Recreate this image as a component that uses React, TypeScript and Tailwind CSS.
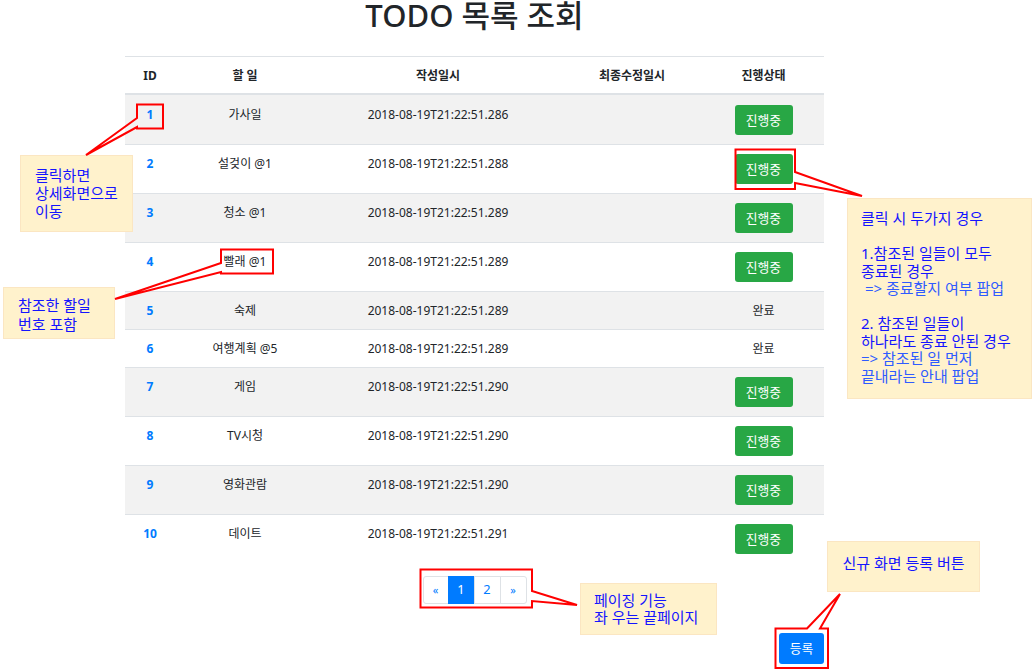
import React from "react";

type Row = { id: number; title: string; created: string; done: boolean };

const rows: Row[] = [
  { id: 1, title: "가사일", created: "2018-08-19T21:22:51.286", done: false },
  { id: 2, title: "설겆이 @1", created: "2018-08-19T21:22:51.288", done: false },
  { id: 3, title: "청소 @1", created: "2018-08-19T21:22:51.289", done: false },
  { id: 4, title: "빨래 @1", created: "2018-08-19T21:22:51.289", done: false },
  { id: 5, title: "숙제", created: "2018-08-19T21:22:51.289", done: true },
  { id: 6, title: "여행계획 @5", created: "2018-08-19T21:22:51.289", done: true },
  { id: 7, title: "게임", created: "2018-08-19T21:22:51.290", done: false },
  { id: 8, title: "TV시청", created: "2018-08-19T21:22:51.290", done: false },
  { id: 9, title: "영화관람", created: "2018-08-19T21:22:51.290", done: false },
  { id: 10, title: "데이트", created: "2018-08-19T21:22:51.291", done: false },
];

const grid = "grid grid-cols-[50px_140px_246px_142px_121px]";

export default function App() {
  return (
    <div
      className="relative w-[1036px] h-[672px] overflow-hidden bg-white text-[#212529]"
      style={{ fontFamily: '"Noto Sans", "Noto Sans CJK KR", sans-serif' }}
    >
      <div className="ml-[125px] w-[699px]">
        <h1 className="h-[56px] text-center text-[31px] leading-none font-medium">
          TODO 목록 조회
        </h1>

        <div className="text-[12px] leading-[19px]">
          <div className={`${grid} h-[39px] border-t border-b-2 border-[#dee2e6] font-bold items-center text-center`}>
            <div>ID</div>
            <div>할 일</div>
            <div>작성일시</div>
            <div>최종수정일시</div>
            <div>진행상태</div>
          </div>
          {rows.map((r, i) => (
            <div
              key={r.id}
              className={`${grid} text-center ${r.done ? "h-[38px]" : "h-[49px]"} ${
                i === 0 ? "pt-[10px]" : "border-t border-[#dee2e6] pt-[9px]"
              } ${i % 2 === 0 ? "bg-[#f2f2f2]" : "bg-white"}`}
            >
              <div className="font-bold text-[#007bff]">{r.id}</div>
              <div>{r.title}</div>
              <div>{r.created}</div>
              <div></div>
              <div className="flex justify-center">
                {r.done ? (
                  <span>완료</span>
                ) : (
                  <button className="w-[58px] h-[30px] rounded-[3px] bg-[#28a745] text-white text-[12.8px] leading-none flex items-center justify-center">
                    진행중
                  </button>
                )}
              </div>
            </div>
          ))}
        </div>

        <div className="mt-[13px] flex justify-center text-[12.8px]">
          <div className="flex">
            <a className="w-[26px] h-[28px] flex items-center justify-center border border-[#dee2e6] rounded-l-[3px] text-[#007bff] text-[11px]">
              «
            </a>
            <a className="-ml-px w-[27px] h-[28px] flex items-center justify-center border border-[#007bff] bg-[#007bff] text-white">
              1
            </a>
            <a className="-ml-px w-[27px] h-[28px] flex items-center justify-center border border-[#dee2e6] text-[#007bff]">
              2
            </a>
            <a className="-ml-px w-[27px] h-[28px] flex items-center justify-center border border-[#dee2e6] rounded-r-[3px] text-[#007bff] text-[11px]">
              »
            </a>
          </div>
        </div>

        <div className="mt-[29px] flex justify-end">
          <button className="w-[45px] h-[31px] rounded-[3px] bg-[#007bff] text-white text-[12.8px] flex items-center justify-center">
            등록
          </button>
        </div>
      </div>

      {/* annotation callouts */}
      <div className="absolute left-[20px] top-[155px] w-[113px] h-[77px] bg-[#fff2cc] border border-[#fbe6c2] pl-[14px] pt-[10px] text-[15px] leading-[18px] text-[#1414ff]">
        <div>클릭하면</div>
        <div>상세화면으로</div>
        <div>이동</div>
      </div>

      <div className="absolute left-[3px] top-[287px] w-[112px] h-[52px] bg-[#fff2cc] border border-[#fbe6c2] pl-[14px] pt-[8px] text-[15px] leading-[19px] text-[#1414ff]">
        <div>참조한 할일</div>
        <div>번호 포함</div>
      </div>

      <div className="absolute left-[847px] top-[198px] w-[185px] h-[201px] bg-[#fff2cc] border border-[#fbe6c2] pl-[13px] pt-[11px] text-[15px] leading-[17.5px] text-[#1414ff] whitespace-pre">
        <div>클릭 시 두가지 경우</div>
        <div>&nbsp;</div>
        <div>1.참조된 일들이 모두</div>
        <div>종료된 경우</div>
        <div className="text-[#2f5bff]"> =&gt; 종료할지 여부 팝업</div>
        <div>&nbsp;</div>
        <div>2. 참조된 일들이</div>
        <div>하나라도 종료 안된 경우</div>
        <div className="text-[#2f5bff]">=&gt; 참조된 일 먼저</div>
        <div className="text-[#2f5bff]">끝내라는 안내 팝업</div>
      </div>

      <div className="absolute left-[580px] top-[583px] w-[137px] h-[52px] bg-[#fff2cc] border border-[#fbe6c2] pl-[13px] pt-[8px] text-[15px] leading-[17px] text-[#1414ff]">
        <div>페이징 기능</div>
        <div>좌 우는 끝페이지</div>
      </div>

      <div className="absolute left-[827px] top-[541px] w-[153px] h-[51px] bg-[#fff2cc] border border-[#fbe6c2] flex justify-center pt-[12px] text-[15px] leading-[18px] text-[#1414ff]">
        신규 화면 등록 버튼
      </div>

      <svg
        className="absolute left-0 top-0 pointer-events-none"
        width="1036"
        height="672"
        viewBox="0 0 1036 672"
        fill="none"
        stroke="#ff0000"
        strokeWidth="2"
        strokeLinejoin="miter"
      >
        <path d="M137 104.5 H163 V128.5 H137 V127 L86 155 L137 118 Z" />
        <path d="M735.5 149.5 H795 V172 L862 196 L795 183 V189 H735.5 Z" />
        <path d="M221 249.5 H273 V273.5 H221 V272 L115 299 L221 263 Z" />
        <path d="M420.5 569.5 H532 V591 L577 605 L532 601 V607.5 H420.5 Z" />
        <path d="M775.5 628.5 H807 L840 594 L820 628.5 H828 V668 H775.5 Z" />
      </svg>
    </div>
  );
}
